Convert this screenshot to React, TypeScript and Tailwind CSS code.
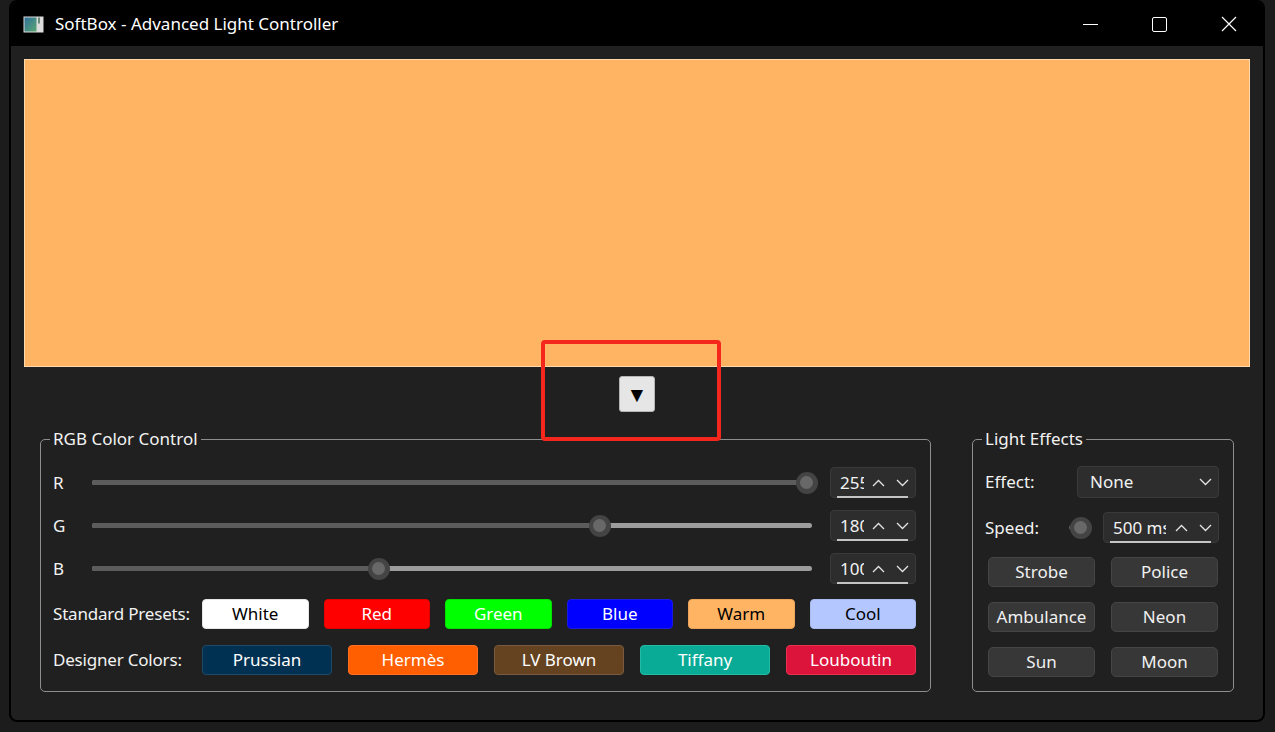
import { useState } from "react"

const font = { fontFamily: '"Noto Sans", "Open Sans", Arial, sans-serif' }

function Chevron({ up }: { up?: boolean }) {
    return (
        <svg width="13" height="8" viewBox="0 0 13 8" className="shrink-0">
            <polyline
                points={up ? "1,7 6.5,1.5 12,7" : "1,1 6.5,6.5 12,1"}
                fill="none"
                stroke="#e4e4e4"
                strokeWidth="1.3"
            />
        </svg>
    )
}

function Slider({ value }: { value: number }) {
    const pct = (value / 255) * 97.8 + 1.5
    return (
        <div className="relative flex-1 h-[5px] rounded-full bg-[#9c9c9c]">
            <div className="absolute left-0 top-0 h-full rounded-full bg-[#5c5c5c]" style={{ width: `${pct}%` }} />
            <div
                className="absolute top-1/2 -translate-x-1/2 -translate-y-1/2 w-[22px] h-[22px] rounded-full bg-[#444] flex items-center justify-center"
                style={{ left: `${pct}%` }}
            >
                <div className="w-[13px] h-[13px] rounded-full bg-[#686868]" />
            </div>
        </div>
    )
}

function SpinBox({ value, w, textW }: { value: string; w: string; textW: string }) {
    return (
        <div className={`relative ${w} h-[31px] shrink-0 rounded-[4px] bg-[#2d2d2d] border border-[#3a3a3a] flex items-center pl-[9px] pr-[6px]`}>
            <div className={`${textW} overflow-hidden whitespace-nowrap text-[17px] text-[#f2f2f2] leading-none`}>{value}</div>
            <div className="ml-auto flex items-center gap-[11px]">
                <Chevron up />
                <Chevron />
            </div>
            <div className="absolute -bottom-[1px] left-[6px] right-[7px] h-[2px] bg-[#c4c4c4]" />
        </div>
    )
}

const standard = [
    { name: "White", bg: "bg-[#ffffff] border-[#e6e6e6] text-black" },
    { name: "Red", bg: "bg-[#ff0000] border-[#e00000] text-white" },
    { name: "Green", bg: "bg-[#00ff00] border-[#00e000] text-white" },
    { name: "Blue", bg: "bg-[#0000ff] border-[#1a1ae0] text-white" },
    { name: "Warm", bg: "bg-[#ffb464] border-[#eea55a] text-black" },
    { name: "Cool", bg: "bg-[#b4c8ff] border-[#a8bcf0] text-black" },
]

const designer = [
    { name: "Prussian", bg: "bg-[#003153] border-[#1e4a68] text-white" },
    { name: "Hermès", bg: "bg-[#ff5f00] border-[#ff7020] text-white" },
    { name: "LV Brown", bg: "bg-[#654321] border-[#7a5a3c] text-white" },
    { name: "Tiffany", bg: "bg-[#0aab96] border-[#22bba6] text-white" },
    { name: "Louboutin", bg: "bg-[#dc143c] border-[#e8324f] text-white" },
]

const effects = ["Strobe", "Police", "Ambulance", "Neon", "Sun", "Moon"]

export default function App() {
    const [rgb] = useState({ r: 255, g: 180, b: 100 })
    const rows: [string, number][] = [["R", rgb.r], ["G", rgb.g], ["B", rgb.b]]

    return (
        <div className="relative w-[1275px] h-[732px] bg-[#1c1c1c] overflow-hidden text-[#f2f2f2]" style={font}>
            <div className="ml-[9px] w-[1256px] h-[722px] border-2 border-black rounded-[8px] overflow-hidden bg-[#202020] flex flex-col">
                {/* title bar */}
                <div className="h-[44px] bg-black flex items-center shrink-0">
                    <svg width="21" height="17" viewBox="0 0 21 17" className="ml-[12px]">
                        <defs>
                            <linearGradient id="ic" x1="0" y1="0" x2="1" y2="1">
                                <stop offset="0" stopColor="#2f6f9a" />
                                <stop offset="1" stopColor="#5aa772" />
                            </linearGradient>
                        </defs>
                        <rect x="0.5" y="0.5" width="20" height="16" fill="#dcdcdc" />
                        <rect x="1.5" y="1.5" width="12" height="14" fill="url(#ic)" />
                        <rect x="15" y="1.5" width="2" height="6" fill="#6a8a7a" />
                    </svg>
                    <span className="ml-[11px] text-[17px] text-white">SoftBox - Advanced Light Controller</span>
                    <div className="ml-auto flex h-full">
                        <div className="w-[69px] flex items-center justify-center">
                            <div className="w-[15px] h-[1px] bg-white" />
                        </div>
                        <div className="w-[69px] flex items-center justify-center">
                            <div className="w-[15px] h-[15px] border border-white rounded-[2px]" />
                        </div>
                        <div className="w-[69px] flex items-center justify-center">
                            <svg width="16" height="16" viewBox="0 0 16 16">
                                <path d="M1 1 L15 15 M15 1 L1 15" stroke="white" strokeWidth="1.2" />
                            </svg>
                        </div>
                    </div>
                </div>

                {/* content */}
                <div className="flex-1 px-[13px] pt-[13px] flex flex-col">
                    <div className="h-[308px] bg-[#ffb464] border border-[#ffd9ae]" />

                    <div className="flex justify-center mt-[9px]">
                        <button className="w-[36px] h-[36px] bg-[#e6e6e6] border border-[#b4b4b4] rounded-[3px] flex items-center justify-center text-black text-[21px] leading-none">
                            ▼
                        </button>
                    </div>

                    <div className="flex gap-[41px] px-[16px] mt-[17px]">
                        {/* RGB group */}
                        <fieldset className="flex-1 border border-[#8e8e8e] rounded-[5px]">
                            <legend className="ml-[9px] px-[3px] text-[17px] leading-[20px]">RGB Color Control</legend>
                            <div className="pl-[12px] pr-[14px] pt-[18px] pb-[16px] flex flex-col">
                                {rows.map(([label, v]) => (
                                    <div key={label} className="flex items-center h-[31px] mb-[12px]">
                                        <span className="w-[39px] text-[17px]">{label}</span>
                                        <Slider value={v} />
                                        <div className="w-[18px]" />
                                        <SpinBox value={String(v)} w="w-[86px]" textW="w-[24px]" />
                                    </div>
                                ))}
                                <div className="flex items-center mt-[3px]">
                                    <span className="w-[149px] text-[17px] tracking-[-0.2px] whitespace-nowrap">Standard Presets:</span>
                                    <div className="flex-1 flex gap-[15px]">
                                        {standard.map((p) => (
                                            <button key={p.name} className={`flex-1 h-[30px] rounded-[4px] border text-[17px] ${p.bg}`}>
                                                {p.name}
                                            </button>
                                        ))}
                                    </div>
                                </div>
                                <div className="flex items-center mt-[16px]">
                                    <span className="w-[149px] text-[17px] tracking-[-0.2px] whitespace-nowrap">Designer Colors:</span>
                                    <div className="flex-1 flex gap-[16px]">
                                        {designer.map((p) => (
                                            <button key={p.name} className={`flex-1 h-[30px] rounded-[4px] border text-[17px] ${p.bg}`}>
                                                {p.name}
                                            </button>
                                        ))}
                                    </div>
                                </div>
                            </div>
                        </fieldset>

                        {/* Light effects group */}
                        <fieldset className="w-[262px] shrink-0 border border-[#8e8e8e] rounded-[5px]">
                            <legend className="ml-[9px] px-[3px] text-[17px] leading-[20px]">Light Effects</legend>
                            <div className="pl-[12px] pr-[14px] pt-[17px] flex flex-col">
                                <div className="flex items-center">
                                    <span className="w-[92px] text-[17px]">Effect:</span>
                                    <div className="flex-1 h-[32px] rounded-[4px] bg-[#2d2d2d] border border-[#3a3a3a] flex items-center pl-[12px] pr-[6px] text-[17px]">
                                        None
                                        <div className="ml-auto"><Chevron /></div>
                                    </div>
                                </div>
                                <div className="flex items-center mt-[14px]">
                                    <span className="w-[84px] text-[17px]">Speed:</span>
                                    <div className="relative w-[23px] h-[5px] rounded-full bg-[#5c5c5c] mr-[11px]">
                                        <div className="absolute left-1/2 top-1/2 -translate-x-1/2 -translate-y-1/2 w-[22px] h-[22px] rounded-full bg-[#444] flex items-center justify-center">
                                            <div className="w-[13px] h-[13px] rounded-full bg-[#686868]" />
                                        </div>
                                    </div>
                                    <SpinBox value="500 ms" w="w-[116px]" textW="w-[53px]" />
                                </div>
                                <div className="grid grid-cols-2 gap-x-[16px] gap-y-[15px] ml-[3px] mr-[1px] mt-[14px]">
                                    {effects.map((e) => (
                                        <button key={e} className="h-[30px] rounded-[5px] bg-[#373737] border border-[#454545] text-[17px] text-[#f0f0f0]">
                                            {e}
                                        </button>
                                    ))}
                                </div>
                            </div>
                        </fieldset>
                    </div>
                </div>
            </div>

            {/* annotation */}
            <div className="absolute left-[541px] top-[340px] w-[180px] h-[101px] border-[4px] border-[#f5261b] rounded-[4px]" />
        </div>
    )
}
